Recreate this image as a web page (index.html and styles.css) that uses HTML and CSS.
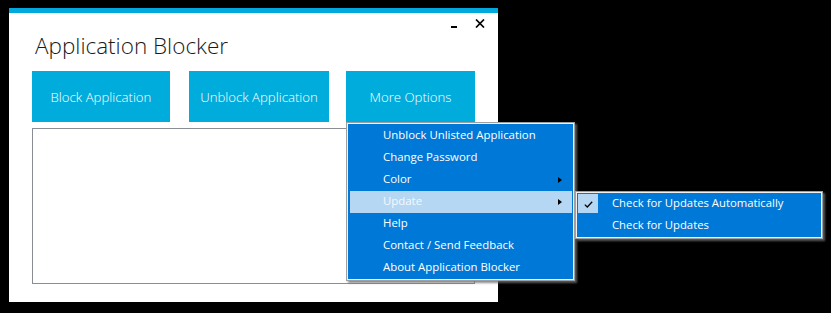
FILE: index.html
```html
<!DOCTYPE html>
<html>
<head>
  <meta charset="UTF-8" />
  <title>Application Blocker</title>
  <link rel="stylesheet" href="styles.css">
</head>
<body>
  <div class="window">
    <div class="header">
      <h1>Application Blocker</h1>
      <div class="controls">
        <span class="minimize"></span>
        <svg class="close" width="10" height="9" viewBox="0 0 10 9">
          <path d="M1 0.5 L9 8.5 M9 0.5 L1 8.5" stroke="#000" stroke-width="1.7" />
        </svg>
      </div>
    </div>

    <div class="actions">
      <button class="action block">Block Application</button>
      <button class="action unblock">Unblock Application</button>
      <button class="action more">More Options</button>
    </div>

    <div class="app-list"></div>
  </div>

  <!-- Context menu -->
  <ul class="menu main-menu">
    <li>Unblock Unlisted Application</li>
    <li>Change Password</li>
    <li class="has-sub">Color</li>
    <li class="has-sub hover">Update</li>
    <li>Help</li>
    <li>Contact / Send Feedback</li>
    <li>About Application Blocker</li>
  </ul>

  <ul class="menu sub-menu">
    <li class="checked">
      <svg class="tick" width="9" height="7" viewBox="0 0 9 7">
        <path d="M0.8 3.6 L3.3 6 L8.2 0.8" fill="none" stroke="#000" stroke-width="1.3" />
      </svg>
      Check for Updates Automatically
    </li>
    <li>Check for Updates</li>
  </ul>
</body>
</html>
```
FILE: styles.css
```css
body {
  margin: 0;
  background-color: #000;
  font-family: 'Open Sans', sans-serif;
  height: 313px;
  overflow: hidden;
}

.window {
  margin: 8px 0 0 9px;
  width: 466px;
  height: 289px;
  background-color: #fff;
  border-top: 5px solid #00a9dc;
  padding: 0 0 0 23px;
  display: flex;
  flex-direction: column;
}

.header {
  display: flex;
  justify-content: space-between;
  align-items: flex-start;
  height: 58px;
}

h1 {
  margin: 17px 0 0 3px;
  font-size: 22.5px;
  font-weight: 300;
  line-height: 32px;
  color: #1a1a1a;
}

.controls {
  display: flex;
  align-items: flex-start;
  margin: 6px 13px 0 0;
}

.minimize {
  display: block;
  width: 6px;
  height: 2px;
  background-color: #000;
  margin: 7px 18px 0 0;
}

.actions {
  display: flex;
  height: 51px;
}

.action {
  border: none;
  margin: 0;
  padding: 0;
  background-color: #00acdb;
  color: #fff;
  font-family: 'Open Sans', sans-serif;
  font-size: 13.2px;
  font-weight: 300;
  height: 51px;
}

.block {
  width: 138px;
  margin-right: 19px;
}

.unblock {
  width: 140px;
  margin-right: 17px;
}

.more {
  width: 129px;
}

.app-list {
  margin-top: 6px;
  width: 441px;
  height: 154px;
  border: 1px solid #8a8d93;
}

.menu {
  position: absolute;
  list-style-type: none;
  margin: 0;
  background-color: #0078d7;
  border: 1px solid #a0a0a0;
  box-shadow: inset 0 0 0 1px #f0f0f0, 2px 2px 2px rgba(110, 110, 110, 0.8);
  font-family: 'Open Sans', sans-serif;
  font-size: 11.4px;
  color: #fff;
}

.main-menu {
  left: 346px;
  top: 122px;
  width: 223px;
  padding: 2px 2px 1px 2px;
}

.sub-menu {
  left: 575px;
  top: 191px;
  width: 242px;
  padding: 1px 2px 1px 2px;
  font-size: 11.3px;
}

.menu li {
  position: relative;
  height: 22px;
  line-height: 20px;
  padding-left: 34px;
}

.menu li.hover {
  background-color: #b5d7f3;
  color: #f4f9fd;
  margin-left: 1px;
  padding-left: 33px;
}

.has-sub::after {
  content: '';
  position: absolute;
  right: 10px;
  top: 8px;
  border-left: 4px solid #000;
  border-top: 3.5px solid transparent;
  border-bottom: 3.5px solid transparent;
}

.checked::before {
  content: '';
  position: absolute;
  left: 0;
  top: 1px;
  width: 20px;
  height: 19px;
  background-color: #b5d7f3;
}

.tick {
  position: absolute;
  left: 6px;
  top: 8px;
  z-index: 1;
}
```
